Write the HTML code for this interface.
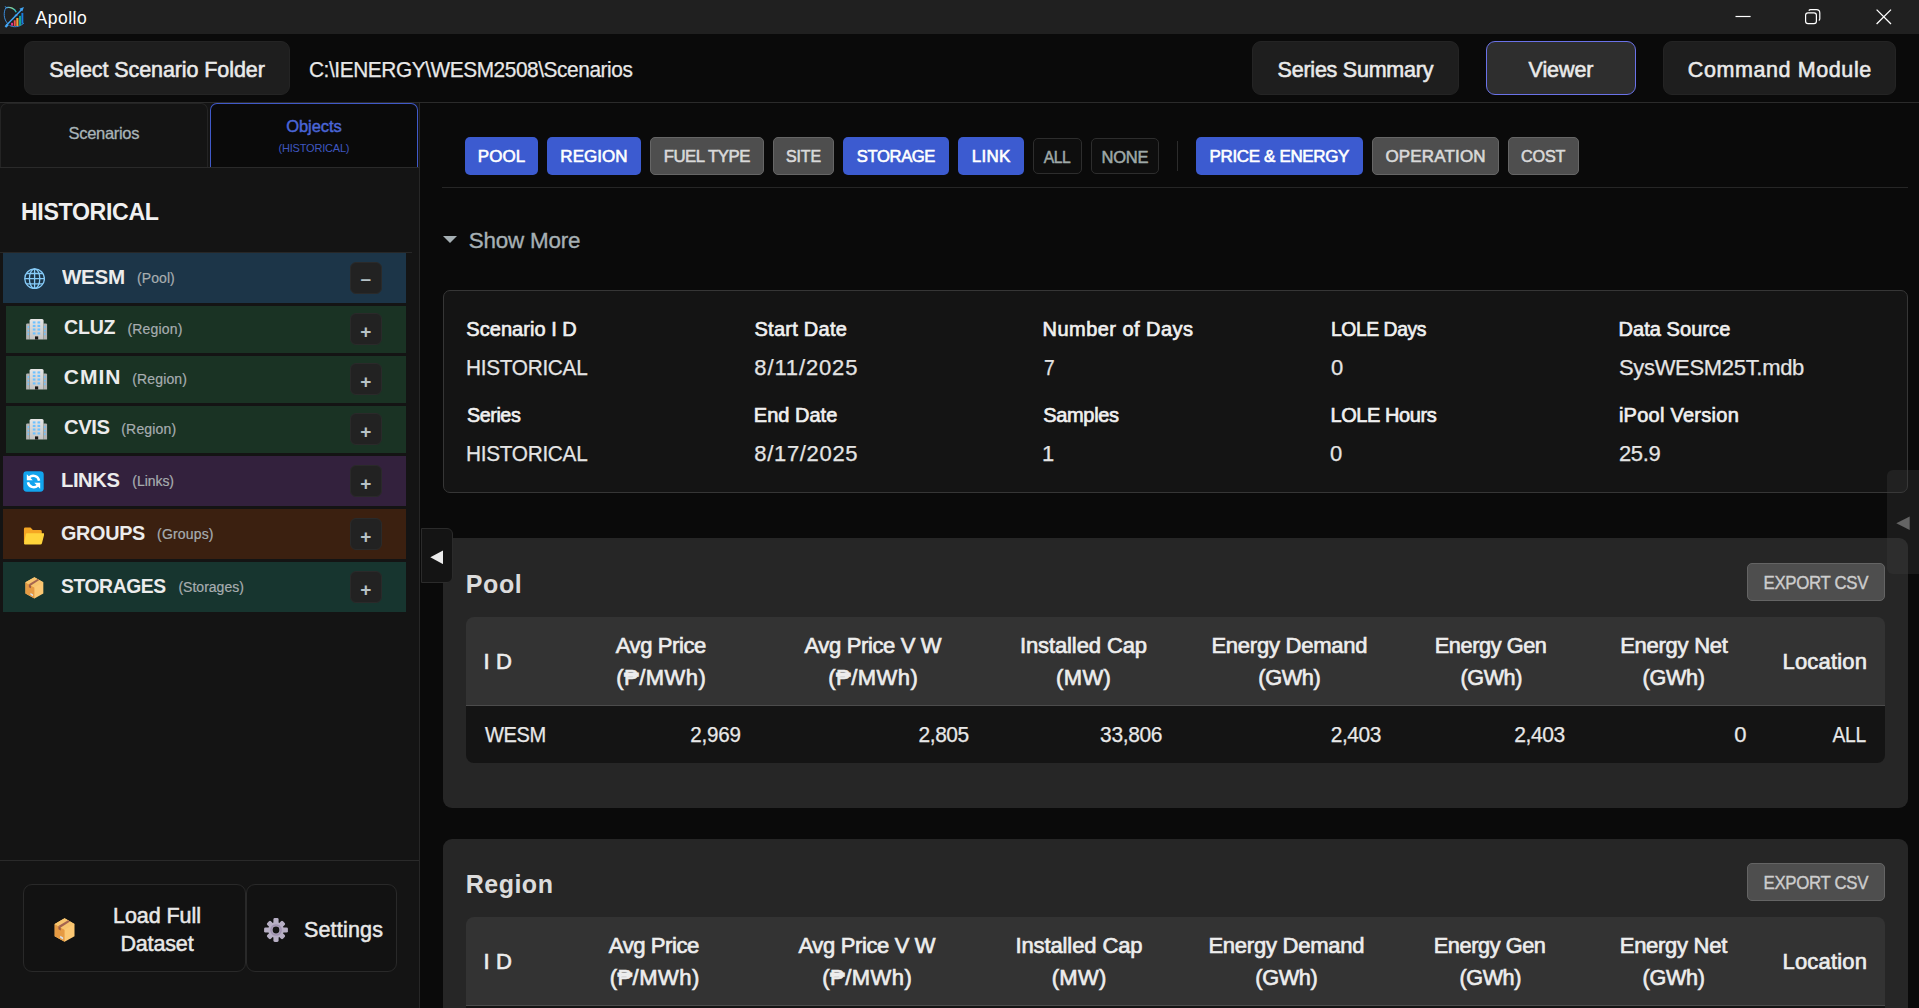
<!DOCTYPE html>
<html lang="en">
<head>
<meta charset="utf-8">
<title>Apollo</title>
<style>
*{box-sizing:border-box;margin:0;padding:0}
html,body{width:1919px;height:1008px;overflow:hidden;background:#0a0a0a;
  font-family:"Liberation Sans",sans-serif;color:#e6e6e6}
.abs{position:absolute}
span{white-space:nowrap}
#app{position:relative;width:1919px;height:1008px;overflow:hidden;background:#0a0a0a}
#titlebar{left:0;top:0;width:1919px;height:34px;background:#202020}
#titlebar .name{left:35px;top:.9px;height:34px;line-height:34px;font-size:17.5px;color:#fff}
#titlebar svg{position:absolute}
#topbar{left:0;top:34px;width:1919px;height:69px;background:#0a0a0a;border-bottom:1px solid #2b2b2b}
.tbtn{position:absolute;top:41px;height:54px;border-radius:9px;background:#1e1e1e;border:1px solid #242424;
  color:#eaeaea;-webkit-text-stroke:.55px #eaeaea;font-size:21.5px;line-height:57px;text-align:center;white-space:nowrap}
.tbtn.active{background:#2e2e2e;border:1.5px solid #6a72e8;line-height:56px}
#path{left:308px;top:42.5px;height:54px;line-height:54px;font-size:22px;color:#e8e8e8;-webkit-text-stroke:.25px #e8e8e8;white-space:nowrap}
#sidebar{left:0;top:103px;width:420px;height:905px;background:#141414;border-right:1px solid #272727}
.tab{position:absolute;top:0;height:65px;text-align:center}
#tab1{left:0;width:208px;background:#141414;border:1px solid #242424;border-bottom:none;border-radius:7px 7px 0 0;
  color:#a9b4b8;-webkit-text-stroke:.3px #a9b4b8;font-size:16.5px;line-height:58px}
#tab2{left:210px;width:208px;background:#0a0a0a;border:1.5px solid #4059c9;border-bottom:none;border-radius:7px 7px 0 0;color:#4a66d8}
#tab2 .t1{position:absolute;left:0;right:0;top:12px;font-size:16.5px;line-height:20px;-webkit-text-stroke:.45px #4a66d8}
#tab2 .t2{position:absolute;left:0;right:0;top:37px;font-size:11px;line-height:14px;color:#3f57c0}
#tabline{left:0;top:64px;width:419px;height:1px;background:#2a2a2a}
#hist{left:22px;top:93.5px;font-size:24px;font-weight:bold;color:#f0f0f0;line-height:30px;white-space:nowrap}
#histline{left:0;top:149px;width:412px;height:1px;background:#272727}
.row{position:absolute;height:50px}
.row .nm{position:absolute;top:0;font-weight:bold;font-size:21px;color:#ececec;white-space:nowrap}
.row .ty{position:absolute;font-size:14px;color:#a7adb0;-webkit-text-stroke:.2px #a7adb0;white-space:nowrap}
.row .ex{position:absolute;width:32px;height:32px;border-radius:6px;background:#222;border:1px solid #2a2a2a;
  color:#b7c2c6;font-size:19px;font-weight:bold;text-align:center}
.row svg{position:absolute}
#sfoot{left:0;top:757px;width:419px;height:1px;background:#2a2a2a}
.fbtn{position:absolute;top:781px;height:88px;border:1px solid #292929;border-radius:9px;background:#121212;color:#e8e8e8;font-size:21.5px;-webkit-text-stroke:.5px #e8e8e8;white-space:nowrap}
.fbtn svg{position:absolute}
.fl{position:absolute}
.chip{position:absolute;top:137px;height:38px;border-radius:5px;font-size:17px;line-height:40px;
  text-align:center;white-space:nowrap;color:#fff;-webkit-text-stroke:.6px #fff}
.chip.on{background:#3c5bd0}
.chip.off{background:#4e4e4e;border:1px solid #666;color:#d9d9d9;-webkit-text-stroke:.6px #d9d9d9;line-height:38px}
.chip.ghost{background:#0e0e0e;border:1px solid #2d2d2d;color:#9fa9a8;-webkit-text-stroke:.5px #9fa9a8;line-height:37px;top:138px;height:36px;font-size:16.5px}
#chipline{left:442px;top:187px;width:1466px;height:1px;background:#262626}
#sep{left:1177px;top:141px;width:1px;height:30px;background:#2c2c2c}
#showmore{left:469px;top:224.8px;font-size:22.4px;line-height:32px;color:#a6b0b4;-webkit-text-stroke:.35px #a6b0b4;white-space:nowrap}
#tri{left:443px;top:235.8px;width:0;height:0;border-left:7px solid transparent;border-right:7px solid transparent;border-top:7.4px solid #a5afb3}
#info{left:443px;top:290px;width:1465px;height:203px;background:#141414;border:1px solid #363636;border-radius:7px}
.lbl{position:absolute;font-size:20px;-webkit-text-stroke:.65px #f0f0f0;line-height:24px;color:#f0f0f0;white-space:nowrap}
.val{position:absolute;font-size:22px;line-height:28px;color:#e4e4e4;-webkit-text-stroke:.25px #e4e4e4;white-space:nowrap}
.card{position:absolute;left:443px;width:1465px;background:#262626;border-radius:9px}
.card h2{position:absolute;left:23px;font-size:25px;font-weight:bold;color:#dcdcdc;line-height:34px;white-space:nowrap}
.exp{position:absolute;left:1304px;width:138px;height:38px;background:#4e4e4e;border:1px solid #646464;border-radius:5px;
  color:#cdcdcd;-webkit-text-stroke:.4px #cdcdcd;font-size:18px;line-height:38px;text-align:center;white-space:nowrap}
.thead{position:absolute;left:23px;width:1419px;height:89px;background:#333;border-radius:8px 8px 0 0;border-bottom:1px solid #4c4c4c}
.th{position:absolute;top:0;height:88px;font-size:22px;-webkit-text-stroke:.65px #ededed;line-height:32px;color:#ededed;text-align:center;white-space:nowrap}
.trow{position:absolute;left:23px;width:1419px;height:57px;background:#141414;border-radius:0 0 8px 8px}
.td{position:absolute;top:0;height:57px;line-height:58px;font-size:22px;color:#e8e8e8;-webkit-text-stroke:.25px #e8e8e8;text-align:right;white-space:nowrap}
#lhandle{left:421px;top:528px;width:32px;height:55px;background:#141414;border:1px solid #2b2b2b;border-radius:0 6px 6px 0}
#rhandle{left:1887px;top:470px;width:32px;height:104px;background:rgba(62,62,62,0.32);border-radius:6px 0 0 6px}
</style>
</head>
<body>
<div id="app">
<div id="titlebar" class="abs">
  <svg style="left:3px;top:5px" width="22" height="24" viewBox="3 5 22 24">
    <defs><linearGradient id="lg" x1="0" y1="0" x2="1" y2="0"><stop offset="0" stop-color="#3d8fe0"/><stop offset="0.55" stop-color="#8fe0a0"/><stop offset="1" stop-color="#14b2c6"/></linearGradient></defs>
    <path d="M5.200 6.300C5.300 7 5.600 7.400 6 7.600C3.400 11.500 3.300 19.500 8 23.800" fill="none" stroke="#3a8ad8" stroke-width="1"/>
    <path d="M6 7.700C10 6.800 14.800 8 16.200 12.300" fill="none" stroke="url(#lg)" stroke-width="1.400"/>
    <path d="M9.500 25.400C13.500 27.600 19.500 27.200 23.900 23.100" fill="none" stroke="#3a8ad8" stroke-width="1"/>
    <rect x="11.100" y="22.800" width="1.900" height="2.900" fill="#e0358a"/>
    <rect x="13.800" y="20.300" width="1.900" height="5.600" fill="#f0524f"/>
    <rect x="16.300" y="18" width="2.100" height="8" fill="#f5a03c"/>
    <rect x="19" y="15.800" width="2" height="9.700" fill="#12a594"/>
    <rect x="21.400" y="12.900" width="1.900" height="10.800" fill="#1a7de0"/>
    <path d="M6.200 25.400L22 9.200" stroke="#42a5f5" stroke-width="1.500" fill="none"/>
    <path d="M23.900 7L19.400 8.700L22.300 11.600Z" fill="#42a5f5"/>
    <path d="M4.600 26.200L7 23.500L8.800 25.300L6.200 27.800Z" fill="#42a5f5"/>
    <path d="M14.200 15.200L16.800 14L16.600 15.200L18.200 15L15.600 16.800L15.900 15.500Z" fill="#42a5f5"/>
  </svg>
  <div class="abs name"><span id="t_apollo" style="letter-spacing:0.49px;margin-right:-0.49px;position:relative;left:0.61px;">Apollo</span></div>
  <svg style="left:1735.2px;top:9px" width="16" height="16" viewBox="0 0 16 16"><path d="M0.5 7.5H15.6" stroke="#fff" stroke-width="1.2"/></svg>
  <svg style="left:1805px;top:9px" width="16" height="16" viewBox="0 0 16 16"><rect x="0.6" y="3.8" width="10.8" height="10.8" rx="2.4" fill="none" stroke="#fff" stroke-width="1.2"/><path d="M3.8 1.6 C4.2 0.9 4.9 0.6 5.6 0.6 H11.4 C13.6 0.6 14.8 1.8 14.8 3.9 V9.8 C14.8 10.6 14.5 11.2 13.8 11.6" fill="none" stroke="#fff" stroke-width="1.2"/></svg>
  <svg style="left:1876px;top:9px" width="16" height="16" viewBox="0 0 16 16"><path d="M0.6 0.6L15 15M15 0.6L0.6 15" stroke="#fff" stroke-width="1.3"/></svg>
</div>
<div id="topbar" class="abs"></div>
<div class="tbtn" style="left:24px;width:266px"><span id="t_ssf" style="letter-spacing:-0.09px;margin-right:0.09px;">Select Scenario Folder</span></div>
<div id="path" class="abs"><span id="t_path" style="letter-spacing:-0.45px;margin-right:0.45px;position:relative;left:0.66px;display:inline-block;transform:scaleX(0.9470);transform-origin:left center;">C:\IENERGY\WESM2508\Scenarios</span></div>
<div class="tbtn" style="left:1252px;width:207px"><span id="t_sersum" style="letter-spacing:-0.24px;margin-right:0.24px;">Series Summary</span></div>
<div class="tbtn active" style="left:1486px;width:150px"><span id="t_viewer" style="letter-spacing:-0.11px;margin-right:0.11px;">Viewer</span></div>
<div class="tbtn" style="left:1663px;width:233px"><span id="t_cmdmod" style="letter-spacing:0.60px;margin-right:-0.60px;">Command Module</span></div>
<div id="sidebar" class="abs">
  <div id="tab1" class="tab"><span id="t_tab1" style="letter-spacing:-0.31px;margin-right:0.31px;">Scenarios</span></div>
  <div id="tab2" class="tab"><div class="t1"><span id="t_tab2a" style="letter-spacing:-0.07px;margin-right:0.07px;">Objects</span></div><div class="t2"><span id="t_tab2b" style="letter-spacing:-0.19px;margin-right:0.19px;">(HISTORICAL)</span></div></div>
  <div id="tabline" class="abs"></div>
  <div id="hist" class="abs"><span id="t_hist" style="letter-spacing:-0.38px;margin-right:0.38px;position:relative;left:-0.58px;display:inline-block;transform:scaleX(0.9659);transform-origin:left center;">HISTORICAL</span></div>
  <div id="histline" class="abs"></div>
  <div class="row" style="left:3px;top:150px;width:403px;height:50px;background:#1c3548"><svg style="left:20.6px;top:15.0px" width="21.200" height="21.400" viewBox="0 0 22 22"><g fill="none" stroke="#86cbf8" stroke-width="1.350"><circle cx="11" cy="11" r="10.200"/><ellipse cx="11" cy="11" rx="5.400" ry="10.200"/><path d="M11 0.800V21.200M0.800 11H21.200M2.400 5.600H19.600M2.400 16.400H19.600"/></g></svg><div class="nm" style="left:58px;line-height:47px"><span id="t_r1n" style="letter-spacing:-0.33px;margin-right:0.33px;position:relative;left:0.50px;display:inline-block;transform:scaleX(0.9799);transform-origin:left center;">WESM</span></div><div class="ty" style="left:134px;top:0;line-height:51px"><span id="t_r1t" style="letter-spacing:0.06px;margin-right:-0.06px;position:relative;left:0.12px;">(Pool)</span></div><div class="ex" style="left:346.9px;top:8.7px;line-height:31px">–</div></div><div class="row" style="left:6px;top:203px;width:400px;height:47px;background:#1a3324"><svg style="left:20.4px;top:13.2px" width="21.200" height="20.600" viewBox="0 0 21.200 20.600"><defs><linearGradient id="bg1" x1="0" y1="0" x2="0" y2="1"><stop offset="0" stop-color="#e6e6e6"/><stop offset="1" stop-color="#c4c4c4"/></linearGradient></defs><path d="M0.100 5.600Q0.100 4.400 1.300 4.400H3.600V20.500H0.100Z" fill="#b3b3b3"/><path d="M21.100 5.600Q21.100 4.400 19.900 4.400H17.600V20.500H21.100Z" fill="#b3b3b3"/><path d="M5.100 0H16.100Q17.600 0 17.600 1.500V20.500H3.600V1.500Q3.600 0 5.100 0Z" fill="url(#bg1)"/><g fill="#6ec1ff"><rect x="6.8" y="2.4" width="2.700" height="2.100"/><rect x="6.8" y="5.9" width="2.700" height="2.100"/><rect x="6.8" y="9.5" width="2.700" height="2.100"/><rect x="6.8" y="13.4" width="2.700" height="2.100"/><rect x="11.5" y="2.4" width="2.700" height="2.100"/><rect x="11.5" y="5.9" width="2.700" height="2.100"/><rect x="11.5" y="9.5" width="2.700" height="2.100"/><rect x="11.5" y="13.4" width="2.700" height="2.100"/><rect x="1.6" y="7.1" width="1.500" height="1.900"/><rect x="1.6" y="10.7" width="1.500" height="1.900"/><rect x="1.6" y="14.2" width="1.500" height="1.900"/><rect x="18.1" y="7.1" width="1.500" height="1.900"/><rect x="18.1" y="10.7" width="1.500" height="1.900"/><rect x="18.1" y="14.2" width="1.500" height="1.900"/></g><rect x="9" y="17.400" width="3.200" height="3.100" fill="#1a1a1a"/></svg><div class="nm" style="left:58px;line-height:42.4px"><span id="t_r2n" style="letter-spacing:-0.21px;margin-right:0.21px;position:relative;left:-0.12px;display:inline-block;transform:scaleX(0.9313);transform-origin:left center;">CLUZ</span></div><div class="ty" style="left:121.5px;top:0;line-height:47px"><span id="t_r2t" style="letter-spacing:0.16px;margin-right:-0.16px;position:relative;left:0.01px;">(Region)</span></div><div class="ex" style="left:343.9px;top:7.2px;line-height:36px">+</div></div><div class="row" style="left:6px;top:253px;width:400px;height:47px;background:#1a3324"><svg style="left:20.4px;top:13.2px" width="21.200" height="20.600" viewBox="0 0 21.200 20.600"><defs><linearGradient id="bg2" x1="0" y1="0" x2="0" y2="1"><stop offset="0" stop-color="#e6e6e6"/><stop offset="1" stop-color="#c4c4c4"/></linearGradient></defs><path d="M0.100 5.600Q0.100 4.400 1.300 4.400H3.600V20.500H0.100Z" fill="#b3b3b3"/><path d="M21.100 5.600Q21.100 4.400 19.900 4.400H17.600V20.500H21.100Z" fill="#b3b3b3"/><path d="M5.100 0H16.100Q17.600 0 17.600 1.500V20.500H3.600V1.500Q3.600 0 5.100 0Z" fill="url(#bg2)"/><g fill="#6ec1ff"><rect x="6.8" y="2.4" width="2.700" height="2.100"/><rect x="6.8" y="5.9" width="2.700" height="2.100"/><rect x="6.8" y="9.5" width="2.700" height="2.100"/><rect x="6.8" y="13.4" width="2.700" height="2.100"/><rect x="11.5" y="2.4" width="2.700" height="2.100"/><rect x="11.5" y="5.9" width="2.700" height="2.100"/><rect x="11.5" y="9.5" width="2.700" height="2.100"/><rect x="11.5" y="13.4" width="2.700" height="2.100"/><rect x="1.6" y="7.1" width="1.500" height="1.900"/><rect x="1.6" y="10.7" width="1.500" height="1.900"/><rect x="1.6" y="14.2" width="1.500" height="1.900"/><rect x="18.1" y="7.1" width="1.500" height="1.900"/><rect x="18.1" y="10.7" width="1.500" height="1.900"/><rect x="18.1" y="14.2" width="1.500" height="1.900"/></g><rect x="9" y="17.400" width="3.200" height="3.100" fill="#1a1a1a"/></svg><div class="nm" style="left:58px;line-height:42.4px"><span id="t_r3n" style="letter-spacing:1.04px;margin-right:-1.04px;position:relative;left:-0.32px;">CMIN</span></div><div class="ty" style="left:126.5px;top:0;line-height:47px"><span id="t_r3t" style="letter-spacing:0.14px;margin-right:-0.14px;position:relative;left:-0.22px;">(Region)</span></div><div class="ex" style="left:343.9px;top:7.2px;line-height:36px">+</div></div><div class="row" style="left:6px;top:303px;width:400px;height:47px;background:#1a3324"><svg style="left:20.4px;top:13.2px" width="21.200" height="20.600" viewBox="0 0 21.200 20.600"><defs><linearGradient id="bg3" x1="0" y1="0" x2="0" y2="1"><stop offset="0" stop-color="#e6e6e6"/><stop offset="1" stop-color="#c4c4c4"/></linearGradient></defs><path d="M0.100 5.600Q0.100 4.400 1.300 4.400H3.600V20.500H0.100Z" fill="#b3b3b3"/><path d="M21.100 5.600Q21.100 4.400 19.900 4.400H17.600V20.500H21.100Z" fill="#b3b3b3"/><path d="M5.100 0H16.100Q17.600 0 17.600 1.500V20.500H3.600V1.500Q3.600 0 5.100 0Z" fill="url(#bg3)"/><g fill="#6ec1ff"><rect x="6.8" y="2.4" width="2.700" height="2.100"/><rect x="6.8" y="5.9" width="2.700" height="2.100"/><rect x="6.8" y="9.5" width="2.700" height="2.100"/><rect x="6.8" y="13.4" width="2.700" height="2.100"/><rect x="11.5" y="2.4" width="2.700" height="2.100"/><rect x="11.5" y="5.9" width="2.700" height="2.100"/><rect x="11.5" y="9.5" width="2.700" height="2.100"/><rect x="11.5" y="13.4" width="2.700" height="2.100"/><rect x="1.6" y="7.1" width="1.500" height="1.900"/><rect x="1.6" y="10.7" width="1.500" height="1.900"/><rect x="1.6" y="14.2" width="1.500" height="1.900"/><rect x="18.1" y="7.1" width="1.500" height="1.900"/><rect x="18.1" y="10.7" width="1.500" height="1.900"/><rect x="18.1" y="14.2" width="1.500" height="1.900"/></g><rect x="9" y="17.400" width="3.200" height="3.100" fill="#1a1a1a"/></svg><div class="nm" style="left:58px;line-height:42.4px"><span id="t_r4n" style="letter-spacing:-0.45px;margin-right:0.45px;position:relative;left:-0.21px;display:inline-block;transform:scaleX(0.9638);transform-origin:left center;">CVIS</span></div><div class="ty" style="left:115.5px;top:0;line-height:47px"><span id="t_r4t" style="letter-spacing:0.17px;margin-right:-0.17px;position:relative;left:-0.22px;">(Region)</span></div><div class="ex" style="left:343.9px;top:7.2px;line-height:36px">+</div></div><div class="row" style="left:3px;top:353px;width:403px;height:50px;background:#33213d"><svg style="left:20.4px;top:15px" width="21" height="21" viewBox="0 0 22 22"><rect x="0.300" y="0.300" width="21.400" height="21.400" rx="3.600" fill="#12a4ee"/><g transform="translate(22 0) scale(-1 1)"><path d="M5.200 10.200A6 6 0 0 1 15.400 6.800" fill="none" stroke="#fff" stroke-width="2.600"/><path d="M18 3.400V9.600H11.800Z" fill="#fff"/><path d="M16.800 11.800A6 6 0 0 1 6.600 15.200" fill="none" stroke="#fff" stroke-width="2.600"/><path d="M4 18.600V12.400H10.200Z" fill="#fff"/></g></svg><div class="nm" style="left:58px;line-height:47px"><span id="t_r5n" style="letter-spacing:-0.45px;margin-right:0.45px;position:relative;left:0.14px;display:inline-block;transform:scaleX(0.9633);transform-origin:left center;">LINKS</span></div><div class="ty" style="left:129.5px;top:0;line-height:51px"><span id="t_r5t" style="letter-spacing:-0.05px;margin-right:0.05px;position:relative;left:-0.22px;">(Links)</span></div><div class="ex" style="left:346.9px;top:8.7px;line-height:36px">+</div></div><div class="row" style="left:3px;top:406px;width:403px;height:50px;background:#3b2010"><svg style="left:19.8px;top:16.6px" width="21.600" height="20" viewBox="0 0 23 20"><path d="M1 2.500Q1 1 2.500 1H8L10.500 3.500H18.500Q20 3.500 20 5V17H1Z" fill="#f5a623"/><path d="M4.200 7H21.500Q23 7 22.600 8.400L20.200 17.600Q19.900 19 18.400 19H2.200Q0.800 19 1.100 17.600L3 8.200Q3.200 7 4.200 7Z" fill="#ffd43b"/></svg><div class="nm" style="left:58px;line-height:47px"><span id="t_r6n" style="letter-spacing:-0.34px;margin-right:0.34px;position:relative;left:-0.02px;display:inline-block;transform:scaleX(0.9430);transform-origin:left center;">GROUPS</span></div><div class="ty" style="left:154.3px;top:0;line-height:51px"><span id="t_r6t" style="letter-spacing:0.16px;margin-right:-0.16px;position:relative;left:-0.19px;">(Groups)</span></div><div class="ex" style="left:346.9px;top:8.7px;line-height:36px">+</div></div><div class="row" style="left:3px;top:459px;width:403px;height:50px;background:#17352f"><svg style="left:22px;top:15px" width="18.8" height="21.8" viewBox="0 0 20 23.200"><path d="M10 0.300L19.500 5.700V17.600L10 22.900L0.500 17.600V5.700Z" fill="#fcc873"/><path d="M10 11.200L0.500 5.700V17.600L10 22.900Z" fill="#e59a43"/><path d="M10 11.200L0.500 5.700L10 0.300L19.500 5.700Z" fill="#f7c46e"/><path d="M13.400 2.230L15.200 3.260L6.300 9.060L4.100 7.780Z" fill="#a5654f"/><path d="M4.100 7.780L6.300 9.060V12L4.100 10.800Z" fill="#9a5a45"/><path d="M5.800 17L8.600 18.600V20.600L5.800 19Z" fill="#d4e2f0"/></svg><div class="nm" style="left:58px;line-height:47px"><span id="t_r7n" style="letter-spacing:-0.45px;margin-right:0.45px;position:relative;left:0.08px;display:inline-block;transform:scaleX(0.9194);transform-origin:left center;">STORAGES</span></div><div class="ty" style="left:175.5px;top:0;line-height:51px"><span id="t_r7t" style="letter-spacing:0.01px;margin-right:-0.01px;position:relative;left:-0.08px;">(Storages)</span></div><div class="ex" style="left:346.9px;top:8.7px;line-height:36px">+</div></div>
  <div id="sfoot" class="abs"></div>
  <div class="fbtn" style="left:23px;width:223px"><svg style="left:29.8px;top:33.0px" width="21.2" height="24.2" viewBox="0 0 20 23.200"><path d="M10 0.300L19.500 5.700V17.600L10 22.900L0.500 17.600V5.700Z" fill="#fcc873"/><path d="M10 11.200L0.500 5.700V17.600L10 22.900Z" fill="#e59a43"/><path d="M10 11.200L0.500 5.700L10 0.300L19.500 5.700Z" fill="#f7c46e"/><path d="M13.400 2.230L15.200 3.260L6.300 9.060L4.100 7.780Z" fill="#a5654f"/><path d="M4.100 7.780L6.300 9.060V12L4.100 10.800Z" fill="#9a5a45"/><path d="M5.800 17L8.600 18.600V20.600L5.800 19Z" fill="#d4e2f0"/></svg><div class="fl" style="left:68px;top:17.3px;line-height:28px;text-align:center;width:130px"><span id="t_lf1" style="letter-spacing:-0.07px;margin-right:0.07px;">Load Full</span><br><span id="t_lf2" style="letter-spacing:-0.15px;margin-right:0.15px;">Dataset</span></div></div>
  <div class="fbtn" style="left:246px;width:151px"><svg style="left:16.800px;top:32.800px" width="24" height="24" viewBox="0 0 24 24"><g fill="#b7afc4"><rect x="9.400" y="0.1" width="5.200" height="9" rx="1.400" transform="rotate(0 12 12)"/><rect x="9.400" y="0.9" width="5.200" height="9" rx="1.400" transform="rotate(45 12 12)"/><rect x="9.400" y="0.1" width="5.200" height="9" rx="1.400" transform="rotate(90 12 12)"/><rect x="9.400" y="0.9" width="5.200" height="9" rx="1.400" transform="rotate(135 12 12)"/><rect x="9.400" y="0.1" width="5.200" height="9" rx="1.400" transform="rotate(180 12 12)"/><rect x="9.400" y="0.9" width="5.200" height="9" rx="1.400" transform="rotate(225 12 12)"/><rect x="9.400" y="0.1" width="5.200" height="9" rx="1.400" transform="rotate(270 12 12)"/><rect x="9.400" y="0.9" width="5.200" height="9" rx="1.400" transform="rotate(315 12 12)"/><circle cx="12" cy="12" r="7.800"/></g><circle cx="12" cy="12" r="5.100" fill="none" stroke="#9f91b0" stroke-width="1.500"/><circle cx="12" cy="12" r="3.400" fill="#131313"/></svg><div class="fl" style="left:57px;top:31px;line-height:28px"><span id="t_sett" style="letter-spacing:0.20px;margin-right:-0.20px;position:relative;left:-0.14px;">Settings</span></div></div>
</div>
<div class="chip on" style="left:465px;width:73px"><span id="t_c0" style="letter-spacing:0.01px;margin-right:-0.01px;">POOL</span></div><div class="chip on" style="left:547px;width:94px"><span id="t_c1" style="letter-spacing:0.04px;margin-right:-0.04px;">REGION</span></div><div class="chip off" style="left:650px;width:114px"><span id="t_c2" style="letter-spacing:-0.45px;margin-right:0.45px;display:inline-block;transform:scaleX(0.9855);transform-origin:center center;">FUEL TYPE</span></div><div class="chip off" style="left:773px;width:61px"><span id="t_c3" style="letter-spacing:-0.18px;margin-right:0.18px;display:inline-block;transform:scaleX(0.9394);transform-origin:center center;">SITE</span></div><div class="chip on" style="left:843px;width:106px"><span id="t_c4" style="letter-spacing:-0.42px;margin-right:0.42px;display:inline-block;transform:scaleX(0.9792);transform-origin:center center;">STORAGE</span></div><div class="chip on" style="left:958px;width:66px"><span id="t_c5" style="letter-spacing:0.24px;margin-right:-0.24px;">LINK</span></div><div class="chip ghost" style="left:1033px;width:49px"><span id="t_c6" style="letter-spacing:-0.45px;margin-right:0.45px;display:inline-block;transform:scaleX(0.9494);transform-origin:center center;">ALL</span></div><div class="chip ghost" style="left:1091px;width:68px"><span id="t_c7" style="letter-spacing:-0.17px;margin-right:0.17px;">NONE</span></div><div class="chip on" style="left:1196px;width:167px"><span id="t_c8" style="letter-spacing:-0.36px;margin-right:0.36px;">PRICE &amp; ENERGY</span></div><div class="chip off" style="left:1372px;width:127px"><span id="t_c9" style="letter-spacing:0.16px;margin-right:-0.16px;">OPERATION</span></div><div class="chip off" style="left:1508px;width:71px"><span id="t_c10" style="letter-spacing:-0.21px;margin-right:0.21px;display:inline-block;transform:scaleX(0.9516);transform-origin:center center;">COST</span></div>
<div id="sep" class="abs"></div>
<div id="chipline" class="abs"></div>
<div id="tri" class="abs"></div>
<div id="showmore" class="abs"><span id="t_showmore" style="letter-spacing:-0.20px;margin-right:0.20px;position:relative;left:-0.31px;">Show More</span></div>
<div id="info" class="abs"></div>
<div class="lbl" style="left:466px;top:316.8px"><span id="t_la0" style="letter-spacing:0.04px;margin-right:-0.04px;position:relative;left:0.30px;">Scenario I D</span></div><div class="val" style="left:466px;top:354.2px"><span id="t_va0" style="letter-spacing:-0.31px;margin-right:0.31px;position:relative;left:0.35px;display:inline-block;transform:scaleX(0.9447);transform-origin:left center;">HISTORICAL</span></div><div class="lbl" style="left:466px;top:402.8px"><span id="t_lb0" style="letter-spacing:-0.43px;margin-right:0.43px;position:relative;left:0.55px;display:inline-block;transform:scaleX(0.9859);transform-origin:left center;">Series</span></div><div class="val" style="left:466px;top:440.2px"><span id="t_vb0" style="letter-spacing:-0.31px;margin-right:0.31px;position:relative;left:0.35px;display:inline-block;transform:scaleX(0.9447);transform-origin:left center;">HISTORICAL</span></div><div class="lbl" style="left:754px;top:316.8px"><span id="t_la1" style="letter-spacing:0.26px;margin-right:-0.26px;position:relative;left:0.48px;">Start Date</span></div><div class="val" style="left:754px;top:354.2px"><span id="t_va1" style="letter-spacing:0.85px;margin-right:-0.85px;position:relative;left:0.36px;">8/11/2025</span></div><div class="lbl" style="left:754px;top:402.8px"><span id="t_lb1" style="letter-spacing:0.01px;margin-right:-0.01px;position:relative;left:-0.16px;">End Date</span></div><div class="val" style="left:754px;top:440.2px"><span id="t_vb1" style="letter-spacing:0.66px;margin-right:-0.66px;position:relative;left:0.36px;">8/17/2025</span></div><div class="lbl" style="left:1042px;top:316.8px"><span id="t_la2" style="letter-spacing:0.45px;margin-right:-0.45px;position:relative;left:0.62px;">Number of Days</span></div><div class="val" style="left:1042px;top:354.2px"><span id="t_va2" style="position:relative;left:1.74px;display:inline-block;transform:scaleX(0.8713);transform-origin:left center;">7</span></div><div class="lbl" style="left:1042px;top:402.8px"><span id="t_lb2" style="letter-spacing:-0.33px;margin-right:0.33px;position:relative;left:1.24px;">Samples</span></div><div class="val" style="left:1042px;top:440.2px"><span id="t_vb2">1</span></div><div class="lbl" style="left:1330px;top:316.8px"><span id="t_la3" style="letter-spacing:-0.44px;margin-right:0.44px;position:relative;left:0.54px;display:inline-block;transform:scaleX(0.9654);transform-origin:left center;">LOLE Days</span></div><div class="val" style="left:1330px;top:354.2px"><span id="t_va3" style="position:relative;left:0.90px;">0</span></div><div class="lbl" style="left:1330px;top:402.8px"><span id="t_lb3" style="letter-spacing:-0.41px;margin-right:0.41px;position:relative;left:0.45px;">LOLE Hours</span></div><div class="val" style="left:1330px;top:440.2px"><span id="t_vb3">0</span></div><div class="lbl" style="left:1619px;top:316.8px"><span id="t_la4" style="letter-spacing:0.06px;margin-right:-0.06px;position:relative;left:-0.49px;">Data Source</span></div><div class="val" style="left:1619px;top:354.2px"><span id="t_va4" style="letter-spacing:-0.31px;margin-right:0.31px;position:relative;left:-0.12px;">SysWESM25T.mdb</span></div><div class="lbl" style="left:1619px;top:402.8px"><span id="t_lb4" style="letter-spacing:0.26px;margin-right:-0.26px;position:relative;left:-0.12px;">iPool Version</span></div><div class="val" style="left:1619px;top:440.2px"><span id="t_vb4" style="letter-spacing:-0.36px;margin-right:0.36px;position:relative;left:-0.08px;">25.9</span></div>
<div class="card" style="top:538px;height:270px"><h2 style="top:28.5px"><span id="t_pooltitle" style="letter-spacing:0.61px;margin-right:-0.61px;position:relative;left:-0.18px;">Pool</span></h2><div class="exp" style="top:25px"><span id="t_exp1" style="letter-spacing:-0.37px;margin-right:0.37px;display:inline-block;transform:scaleX(0.9357);transform-origin:center center;">EXPORT CSV</span></div><div class="thead" style="top:79px"><div class="th" style="left:0px;width:97px;text-align:left;padding-left:18px;line-height:90px"><span id="t_ph0" style="letter-spacing:0.19px;margin-right:-0.19px;position:relative;left:-0.52px;">I D</span></div><div class="th" style="left:97px;width:196px;padding-top:13px"><span id="t_ph1a" style="letter-spacing:-0.40px;margin-right:0.40px;">Avg Price</span><br><span id="t_ph1b" style="letter-spacing:0.46px;margin-right:-0.46px;">(₱/MWh)</span></div><div class="th" style="left:293px;width:228px;padding-top:13px"><span id="t_ph2a" style="letter-spacing:-0.36px;margin-right:0.36px;">Avg Price V W</span><br><span id="t_ph2b" style="letter-spacing:0.46px;margin-right:-0.46px;">(₱/MWh)</span></div><div class="th" style="left:521px;width:193px;padding-top:13px"><span id="t_ph3a" style="letter-spacing:-0.10px;margin-right:0.10px;">Installed Cap</span><br><span id="t_ph3b" style="letter-spacing:0.34px;margin-right:-0.34px;">(MW)</span></div><div class="th" style="left:714px;width:219px;padding-top:13px"><span id="t_ph4a" style="letter-spacing:-0.23px;margin-right:0.23px;">Energy Demand</span><br><span id="t_ph4b" style="letter-spacing:-0.43px;margin-right:0.43px;display:inline-block;transform:scaleX(0.9884);transform-origin:center center;">(GWh)</span></div><div class="th" style="left:933px;width:184px;padding-top:13px"><span id="t_ph5a" style="letter-spacing:-0.41px;margin-right:0.41px;display:inline-block;transform:scaleX(0.9858);transform-origin:center center;">Energy Gen</span><br><span id="t_ph5b" style="letter-spacing:-0.45px;margin-right:0.45px;display:inline-block;transform:scaleX(0.9815);transform-origin:center center;">(GWh)</span></div><div class="th" style="left:1117px;width:182px;padding-top:13px"><span id="t_ph6a" style="letter-spacing:-0.26px;margin-right:0.26px;">Energy Net</span><br><span id="t_ph6b" style="letter-spacing:-0.32px;margin-right:0.32px;display:inline-block;transform:scaleX(0.9805);transform-origin:center center;">(GWh)</span></div><div class="th" style="left:1299px;width:120px;text-align:right;padding-right:18px;line-height:90px"><span id="t_ph7" style="letter-spacing:0.18px;margin-right:-0.18px;position:relative;left:-0.08px;">Location</span></div></div><div class="trow" style="top:168px"><div class="td" style="left:0px;width:97px;text-align:left;padding-left:18px"><span id="t_pd0" style="letter-spacing:-0.45px;margin-right:0.45px;position:relative;left:1.12px;display:inline-block;transform:scaleX(0.9121);transform-origin:left center;">WESM</span></div><div class="td" style="left:97px;width:196px;text-align:right;padding-right:18px"><span id="t_pd1" style="letter-spacing:-0.24px;margin-right:0.24px;position:relative;left:0.26px;display:inline-block;transform:scaleX(0.9379);transform-origin:right center;">2,969</span></div><div class="td" style="left:293px;width:228px;text-align:right;padding-right:18px"><span id="t_pd2" style="letter-spacing:-0.45px;margin-right:0.45px;position:relative;left:0.01px;display:inline-block;transform:scaleX(0.9521);transform-origin:right center;">2,805</span></div><div class="td" style="left:521px;width:193px;text-align:right;padding-right:18px"><span id="t_pd3" style="letter-spacing:-0.38px;margin-right:0.38px;position:relative;left:0.01px;display:inline-block;transform:scaleX(0.9525);transform-origin:right center;">33,806</span></div><div class="td" style="left:714px;width:219px;text-align:right;padding-right:18px"><span id="t_pd4" style="letter-spacing:-0.41px;margin-right:0.41px;position:relative;left:0.15px;display:inline-block;transform:scaleX(0.9488);transform-origin:right center;">2,403</span></div><div class="td" style="left:933px;width:184px;text-align:right;padding-right:18px"><span id="t_pd5" style="letter-spacing:-0.45px;margin-right:0.45px;position:relative;left:-0.02px;display:inline-block;transform:scaleX(0.9568);transform-origin:right center;">2,403</span></div><div class="td" style="left:1117px;width:182px;text-align:right;padding-right:18px"><span id="t_pd6" style="position:relative;left:-0.64px;">0</span></div><div class="td" style="left:1299px;width:120px;text-align:right;padding-right:18px"><span id="t_pd7" style="letter-spacing:-0.45px;margin-right:0.45px;position:relative;left:-0.38px;display:inline-block;transform:scaleX(0.8783);transform-origin:right center;">ALL</span></div></div></div>
<div class="card" style="top:839px;height:300px"><h2 style="top:27.5px"><span id="t_regtitle" style="letter-spacing:0.49px;margin-right:-0.49px;position:relative;left:-0.27px;">Region</span></h2><div class="exp" style="top:24px"><span id="t_exp2" style="letter-spacing:-0.37px;margin-right:0.37px;display:inline-block;transform:scaleX(0.9357);transform-origin:center center;">EXPORT CSV</span></div><div class="thead" style="top:78px"><div class="th" style="left:0px;width:92px;text-align:left;padding-left:18px;line-height:90px"><span id="t_gh0" style="letter-spacing:0.19px;margin-right:-0.19px;position:relative;left:-0.52px;">I D</span></div><div class="th" style="left:92px;width:193px;padding-top:13px"><span id="t_gh1a" style="letter-spacing:-0.45px;margin-right:0.45px;display:inline-block;transform:scaleX(1.0056);transform-origin:center center;">Avg Price</span><br><span id="t_gh1b" style="letter-spacing:0.49px;margin-right:-0.49px;">(₱/MWh)</span></div><div class="th" style="left:285px;width:232px;padding-top:13px"><span id="t_gh2a" style="letter-spacing:-0.36px;margin-right:0.36px;">Avg Price V W</span><br><span id="t_gh2b" style="letter-spacing:0.46px;margin-right:-0.46px;">(₱/MWh)</span></div><div class="th" style="left:517px;width:192px;padding-top:13px"><span id="t_gh3a" style="letter-spacing:-0.10px;margin-right:0.10px;">Installed Cap</span><br><span id="t_gh3b" style="letter-spacing:0.33px;margin-right:-0.33px;">(MW)</span></div><div class="th" style="left:709px;width:223px;padding-top:13px"><span id="t_gh4a" style="letter-spacing:-0.23px;margin-right:0.23px;">Energy Demand</span><br><span id="t_gh4b" style="letter-spacing:-0.43px;margin-right:0.43px;display:inline-block;transform:scaleX(0.9884);transform-origin:center center;">(GWh)</span></div><div class="th" style="left:932px;width:184px;padding-top:13px"><span id="t_gh5a" style="letter-spacing:-0.41px;margin-right:0.41px;display:inline-block;transform:scaleX(0.9858);transform-origin:center center;">Energy Gen</span><br><span id="t_gh5b" style="letter-spacing:-0.45px;margin-right:0.45px;display:inline-block;transform:scaleX(0.9815);transform-origin:center center;">(GWh)</span></div><div class="th" style="left:1116px;width:183px;padding-top:13px"><span id="t_gh6a" style="letter-spacing:-0.28px;margin-right:0.28px;">Energy Net</span><br><span id="t_gh6b" style="letter-spacing:-0.32px;margin-right:0.32px;display:inline-block;transform:scaleX(0.9805);transform-origin:center center;">(GWh)</span></div><div class="th" style="left:1299px;width:120px;text-align:right;padding-right:18px;line-height:90px"><span id="t_gh7" style="letter-spacing:0.18px;margin-right:-0.18px;position:relative;left:-0.08px;">Location</span></div></div><div class="trow" style="top:167px"></div></div>
<div id="lhandle" class="abs"><svg style="position:absolute;left:7.7px;top:20.5px" width="13.8" height="14.6" viewBox="0 0 13 14"><path d="M12.8 0.2V13.8L0.2 7Z" fill="#ececec"/></svg></div>
<div id="rhandle" class="abs"><svg style="position:absolute;left:9.4px;top:45.7px" width="14" height="14.4" viewBox="0 0 14 14"><path d="M13.7 0.2V13.8L0.3 7Z" fill="#646464"/></svg></div>
</div>
</body>
</html>
